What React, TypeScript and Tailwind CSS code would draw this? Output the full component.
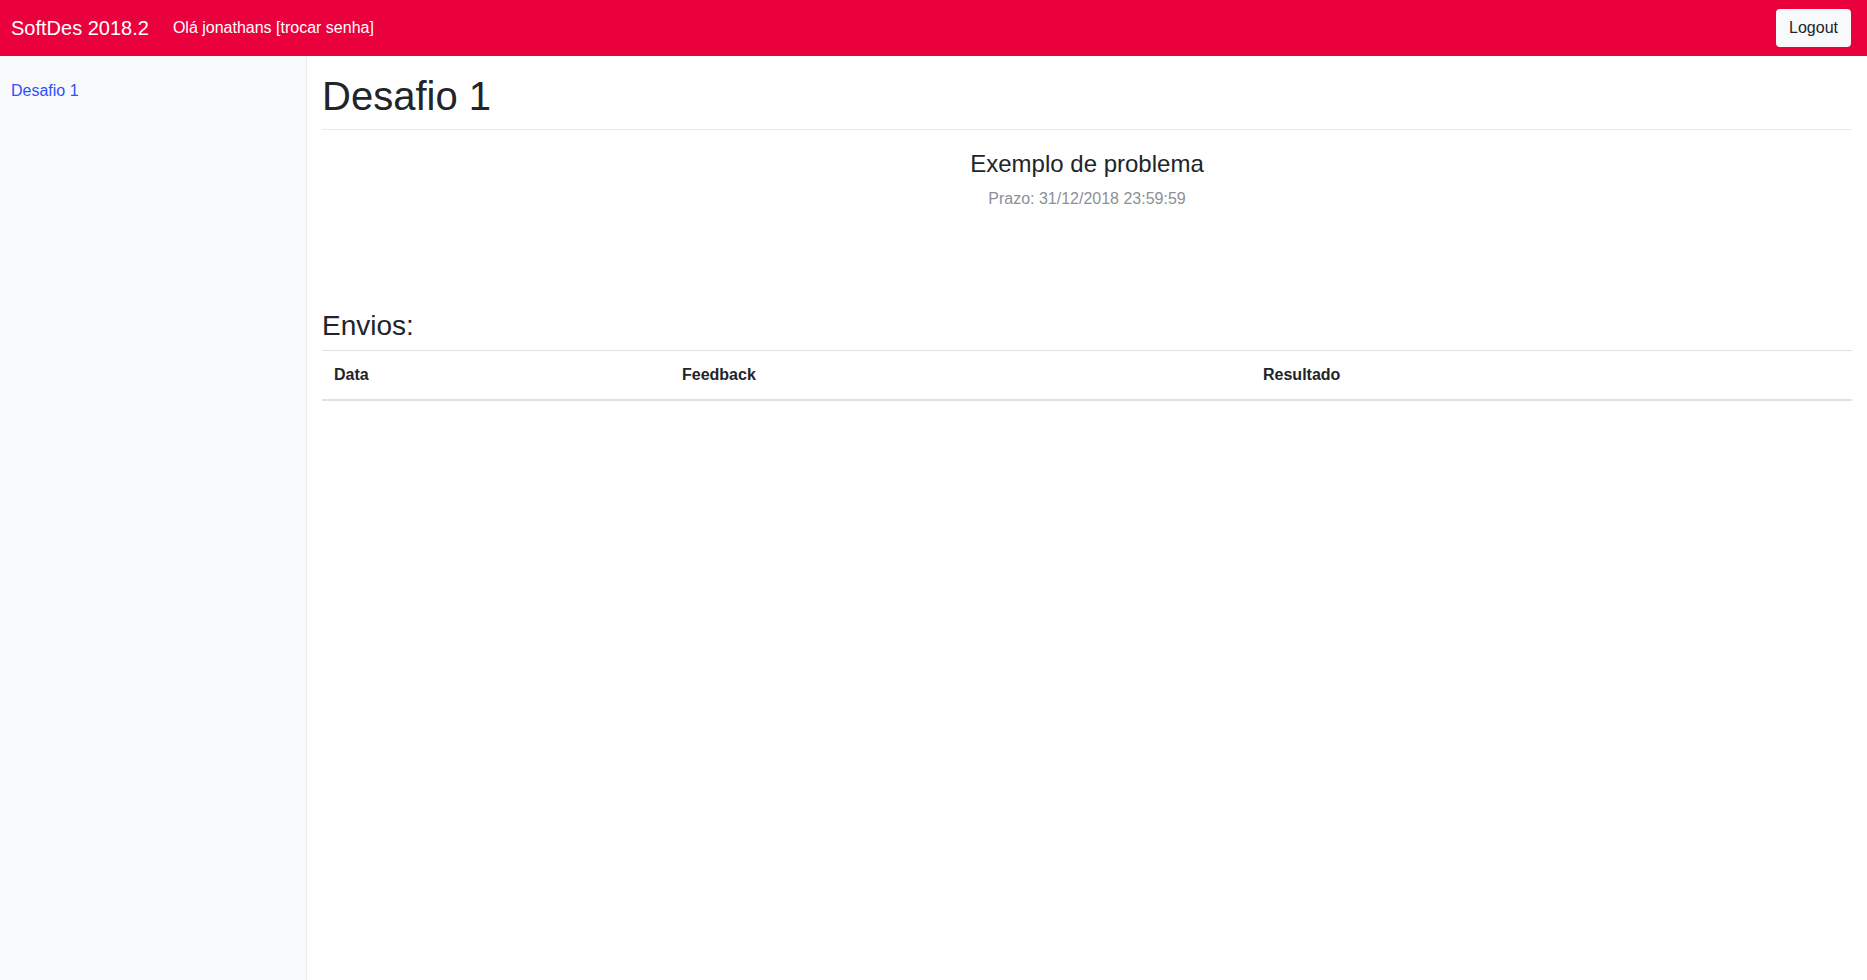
const columns = [
  { label: "Data", width: "w-[348px]" },
  { label: "Feedback", width: "w-[581px]" },
  { label: "Resultado", width: "w-[601px]" },
];

function Header() {
  return (
    <header className="flex h-14 shrink-0 items-center bg-[#ea003d] pr-4 pl-[11px] text-white">
      <a href="#" className="mr-6 text-xl leading-[30px]">
        SoftDes 2018.2
      </a>
      <a href="#" className="leading-6">
        Olá jonathans [trocar senha]
      </a>
      <button className="ml-auto h-[38px] w-[75px] rounded-[4px] bg-[#f8f9fa] text-[#212529]">
        Logout
      </button>
    </header>
  );
}

function Sidebar() {
  return (
    <nav className="w-[307px] shrink-0 border-r border-[#ececec] bg-[#f8f9fa] pt-[23px] pl-[11px]">
      <a href="#" className="block leading-6 text-[#304ffe]">
        Desafio 1
      </a>
    </nav>
  );
}

function Submissions() {
  return (
    <section className="mt-[98px]">
      <h3 className="mb-[7px] text-[28px] leading-[34px]">Envios:</h3>
      <table className="w-full table-fixed border-separate border-spacing-0">
        <thead>
          <tr>
            {columns.map((column) => (
              <th
                key={column.label}
                className={`${column.width} border-t border-b-2 border-[#dee2e6] p-3 text-left leading-6 font-bold`}
              >
                {column.label}
              </th>
            ))}
          </tr>
        </thead>
      </table>
    </section>
  );
}

export default function App() {
  return (
    <div className="flex h-screen flex-col overflow-hidden bg-white font-['Liberation_Sans',sans-serif] text-base text-[#212529]">
      <Header />
      <div className="flex flex-1">
        <Sidebar />
        <main className="flex-1 pt-4 pr-[15px] pl-[15px]">
          <h1 className="h-[58px] border-b border-[#ebebeb] text-[40px] leading-[48px]">
            Desafio 1
          </h1>
          <div className="mt-[19px] text-center">
            <h4 className="mb-[9px] text-2xl leading-[29px]">Exemplo de problema</h4>
            <p className="leading-6 text-[#8b9198]">Prazo: 31/12/2018 23:59:59</p>
          </div>
          <Submissions />
        </main>
      </div>
    </div>
  );
}
